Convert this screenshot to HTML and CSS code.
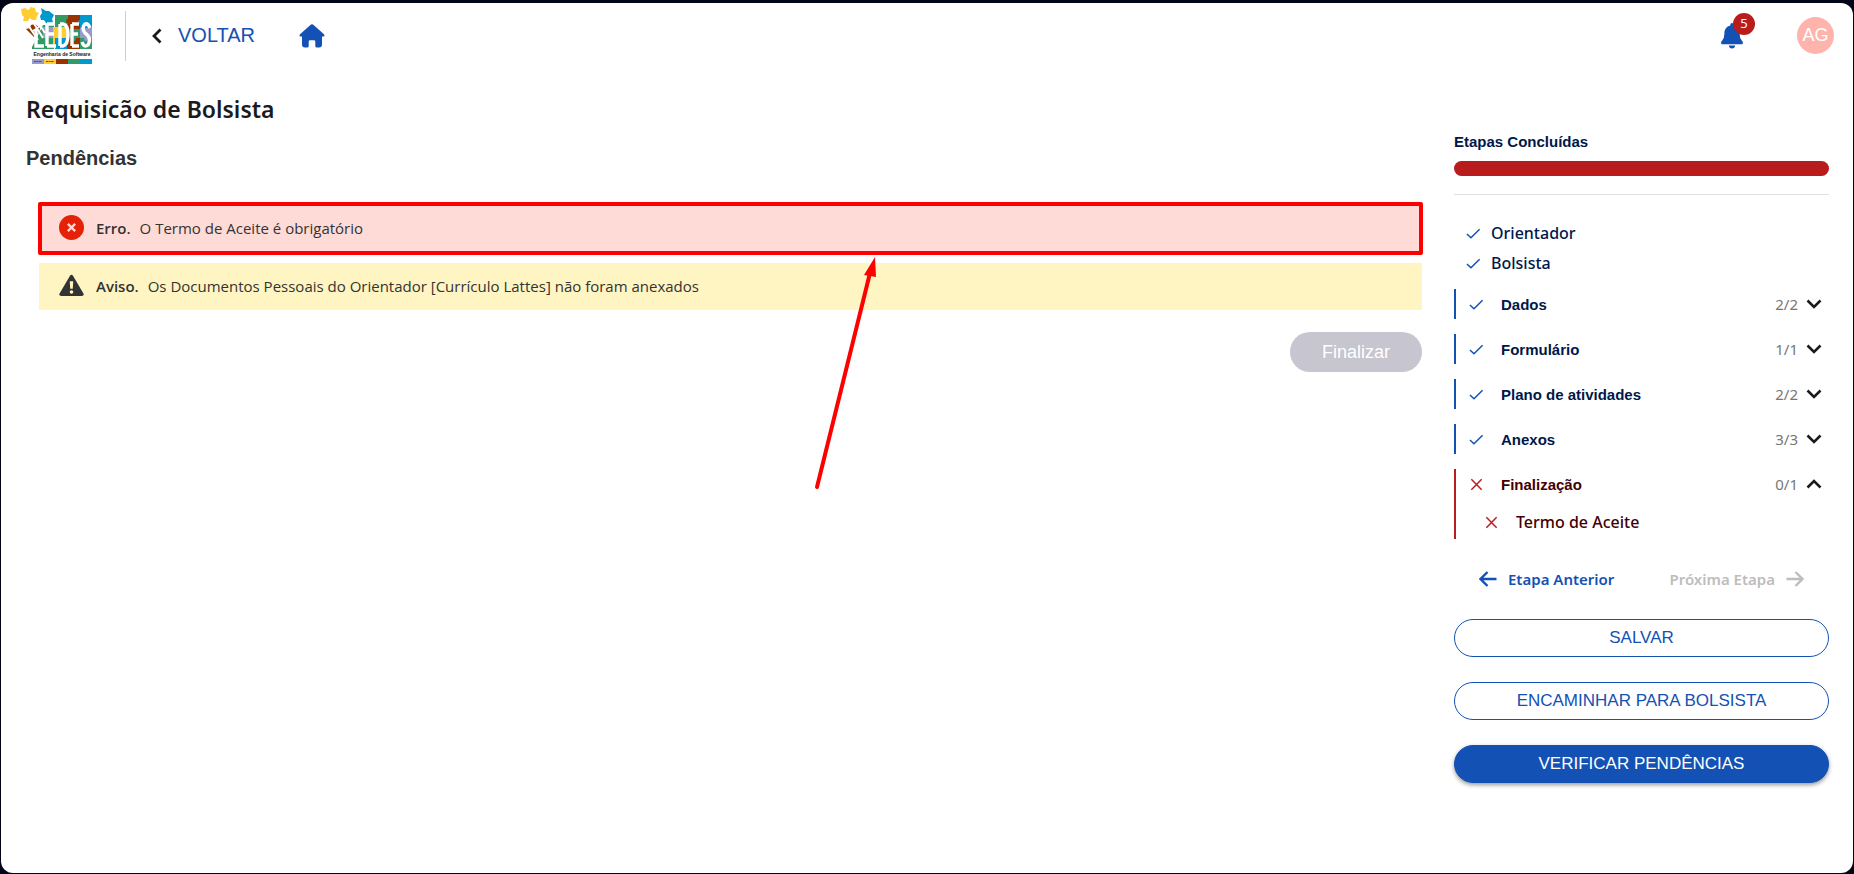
FILE: index.html
```
<!DOCTYPE html>
<html lang="pt-BR">
<head>
  <meta charset="UTF-8">
  <meta name="viewport" content="width=device-width, initial-scale=1">
  <title>Requisicão de Bolsista</title>
  <link rel="stylesheet" href="styles.css">
</head>
<body>

  <!-- Ícones reutilizados -->
  <svg class="sprite" aria-hidden="true">
    <symbol id="check" viewBox="0 0 16 16"><path d="M1 8.5 L5.3 12.5 L14.5 3.5" fill="none" stroke="currentColor" stroke-width="1.6"/></symbol>
    <symbol id="cross" viewBox="0 0 16 16"><path d="M2.5 2.5 L13.5 13.5 M13.5 2.5 L2.5 13.5" fill="none" stroke="currentColor" stroke-width="1.6"/></symbol>
    <symbol id="chevron" viewBox="0 0 16 16"><path d="M1.5 4.5 L8 11 L14.5 4.5" fill="none" stroke="currentColor" stroke-width="2.6"/></symbol>
    <symbol id="arrow" viewBox="0 0 18 18"><path d="M1.5 9 H17.5 M8.5 2 L1.5 9 L8.5 16" fill="none" stroke="currentColor" stroke-width="2.4"/></symbol>
  </svg>

  <div class="app">
    <header class="topbar">
      <svg class="logo" viewBox="0 0 72 58" role="img" aria-label="LEDES Engenharia de Software">
        <!-- Quebra-cabeça -->
        <rect x="11" y="17" width="22" height="25" fill="#339966"/>
        <rect x="34" y="8" width="13" height="12" fill="#339966"/>
        <rect x="47" y="8" width="12" height="14" fill="#993300"/>
        <rect x="59" y="8" width="12" height="15" fill="#0099cc"/>
        <rect x="22" y="20" width="13" height="11" fill="#9999cc"/>
        <rect x="32" y="20" width="15" height="20" fill="#ffcc33"/>
        <rect x="47" y="22" width="12" height="9" fill="#339966"/>
        <rect x="59" y="21" width="12" height="12" fill="#9999cc"/>
        <rect x="34" y="31" width="12" height="11" fill="#0099cc"/>
        <rect x="46" y="31" width="13" height="11" fill="#993300"/>
        <rect x="59" y="31" width="12" height="11" fill="#339966"/>
        <circle cx="47" cy="14" r="2" fill="#993300"/>
        <circle cx="59" cy="15" r="2" fill="#0099cc"/>
        <circle cx="53" cy="32" r="2" fill="#339966"/>
        <circle cx="65" cy="32" r="2" fill="#9999cc"/>
        <path d="M0 16 H10 L22 14 V7 H33 V18 H22 L11 40 H0 Z" fill="#fff"/>
        <path d="M0 2 L5 1 L6 3 L9 2 L9 0 L14 1 L15 5 L18 6 L16 9 L15 13 L11 13 L9 11 L7 14 L2 14 L3 10 L1 8 Z" fill="#ffcc33"/>
        <path d="M20 1 L25 4 L28 4 L33 8 L31 12 L32 15 L29 18 L25 16 L23 13 L20 13 L19 9 L21 6 Z" fill="#0099cc"/>
        <path d="M5 22 L9 21 L10 18 L14 17 L19 21 L18 25 L13 30 L10 27 Z" fill="#993300"/>
        <path d="M7 18 L17 33 M12 15 L22 31 M16 14 L24 26 M12 24 L18 20" fill="none" stroke="#fff" stroke-width="2"/>
        <path d="M15 22 V39 H23 M26 17 V39 M26 17 H34 M26 27 H33 M26 39 H35 M39 17 V39 M39 17 H42 Q47 18 47 27 Q47 38 42 39 H39 M51 17 V39 M51 17 H58 M51 27 H57 M51 39 H58 M69 21 Q67 16 64 17 Q60 21 64 26 Q71 31 67 38 Q63 41 61 35" fill="none" stroke="#fff" stroke-width="3.4"/>
        <text class="logo-text" x="41" y="49" text-anchor="middle">Engenharia de Software</text>
        <rect x="11" y="52" width="12" height="5" fill="#9999cc"/>
        <rect x="23" y="52" width="12" height="5" fill="#ffcc33"/>
        <rect x="35" y="52" width="12" height="5" fill="#993300"/>
        <rect x="47" y="52" width="12" height="5" fill="#339966"/>
        <rect x="59" y="52" width="12" height="5" fill="#0099cc"/>
        <path d="M13 54.5 h8 M25 54.5 h8" stroke="#555" stroke-width="1.2" stroke-dasharray="2 .5"/>
      </svg>
      <a class="back" href="#">
        <svg class="back-icon" viewBox="0 0 10 16" aria-hidden="true"><path d="M8.5 1.5 L2 8 L8.5 14.5" fill="none" stroke="#1b1b1f" stroke-width="2.8"/></svg>
        VOLTAR
      </a>
      <a class="home" href="#" aria-label="Início">
        <svg viewBox="0 0 26 24" aria-hidden="true"><path d="M12 .6 Q13 -.2 14 .6 L25 10.2 Q26.2 12 24.4 12.5 H23 V20.5 Q23 23.5 20 23.5 H17.8 Q16.3 23.5 16.3 22 V17.5 Q16.3 16.2 15 16.2 H11 Q9.7 16.2 9.7 17.5 V22 Q9.7 23.5 8.2 23.5 H6 Q3 23.5 3 20.5 V12.5 H1.6 Q-.2 12 1 10.2 Z" fill="#1351b4"/></svg>
      </a>
      <button class="bell" type="button" aria-label="Notificações">
        <svg viewBox="0 0 22 26" aria-hidden="true"><path d="M11 0 Q12.7 0 12.7 1.8 V2.5 Q18.6 4 18.6 10.5 Q18.6 15 20.8 17.6 Q22 18.8 22 20 Q21.8 21.2 20.5 21.2 H1.5 Q.2 21.2 0 20 Q0 18.8 1.2 17.6 Q3.4 15 3.4 10.5 Q3.4 4 9.3 2.5 V1.8 Q9.3 0 11 0 Z M7.8 22.6 H14.2 Q13.8 25.6 11 25.6 Q8.2 25.6 7.8 22.6 Z" fill="#1351b4"/></svg>
        <span class="badge">5</span>
      </button>
      <button class="avatar" type="button">AG</button>
    </header>

    <div class="layout">
      <main class="content">
        <h1>Requisicão de Bolsista</h1>
        <h2>Pendências</h2>

        <div class="alerts">
          <div class="alert alert-error">
            <svg class="alert-icon" viewBox="0 0 26 26" aria-hidden="true"><circle cx="13" cy="13" r="13" fill="#e52207"/><path d="M9.2 9.2 L16.8 16.8 M16.8 9.2 L9.2 16.8" stroke="#ffdbd7" stroke-width="2.4"/></svg>
            <strong>Erro.</strong>
            <span>O Termo de Aceite é obrigatório</span>
          </div>
          <div class="alert alert-warning">
            <svg class="alert-icon" viewBox="0 0 26 26" aria-hidden="true"><path d="M11.3 3 Q13 .6 14.7 3 L25.4 21.2 Q26.4 24 23.6 24 H2.4 Q-.4 24 .6 21.2 Z" fill="#333"/><path d="M11.2 8.5 H14.8 L14.3 16.5 H11.7 Z" fill="#fff5c2"/><circle cx="13" cy="19.8" r="1.9" fill="#fff5c2"/></svg>
            <strong>Aviso.</strong>
            <span>Os Documentos Pessoais do Orientador [Currículo Lattes] não foram anexados</span>
          </div>
          <svg class="pointer" viewBox="0 0 66 236" aria-hidden="true">
            <path d="M4 230 L57 16" stroke="#f00" stroke-width="4" stroke-linecap="round"/>
            <path d="M62 0 L63 20 L51 18 Z" fill="#f00"/>
          </svg>
        </div>

        <div class="actions">
          <button class="finish" type="button" disabled>Finalizar</button>
        </div>
      </main>

      <aside class="sidebar">
        <h3>Etapas Concluídas</h3>
        <div class="progress"></div>

        <ul class="people">
          <li><svg class="mark"><use href="#check"/></svg>Orientador</li>
          <li><svg class="mark"><use href="#check"/></svg>Bolsista</li>
        </ul>

        <div class="step">
          <button class="step-head" type="button"><svg class="mark"><use href="#check"/></svg><b>Dados</b><span>2/2</span><svg class="toggle"><use href="#chevron"/></svg></button>
        </div>
        <div class="step">
          <button class="step-head" type="button"><svg class="mark"><use href="#check"/></svg><b>Formulário</b><span>1/1</span><svg class="toggle"><use href="#chevron"/></svg></button>
        </div>
        <div class="step">
          <button class="step-head" type="button"><svg class="mark"><use href="#check"/></svg><b>Plano de atividades</b><span>2/2</span><svg class="toggle"><use href="#chevron"/></svg></button>
        </div>
        <div class="step">
          <button class="step-head" type="button"><svg class="mark"><use href="#check"/></svg><b>Anexos</b><span>3/3</span><svg class="toggle"><use href="#chevron"/></svg></button>
        </div>
        <div class="step step-pending">
          <button class="step-head" type="button" aria-expanded="true"><svg class="mark"><use href="#cross"/></svg><b>Finalização</b><span>0/1</span><svg class="toggle toggle-open"><use href="#chevron"/></svg></button>
          <a class="substep" href="#"><svg class="mark"><use href="#cross"/></svg>Termo de Aceite</a>
        </div>

        <div class="pager">
          <button type="button"><svg class="arrow"><use href="#arrow"/></svg>Etapa Anterior</button>
          <button type="button" disabled>Próxima Etapa<svg class="arrow arrow-next"><use href="#arrow"/></svg></button>
        </div>

        <div class="sidebar-actions">
          <button class="btn" type="button">SALVAR</button>
          <button class="btn" type="button">ENCAMINHAR PARA BOLSISTA</button>
          <button class="btn btn-primary" type="button">VERIFICAR PENDÊNCIAS</button>
        </div>
      </aside>
    </div>
  </div>

</body>
</html>
```

FILE: styles.css
```
* {
  box-sizing: border-box;
}

body {
  margin: 0;
  min-height: 100vh;
  padding: 3px 1px 1px;
  display: flex;
  background: #020617;
  color: #1b1b1f;
  font-family: "Noto Sans", sans-serif;
  font-size: 16px;
}

button {
  padding: 0;
  border: 0;
  background: none;
  color: inherit;
  font: inherit;
  cursor: pointer;
}

a {
  color: inherit;
  text-decoration: none;
}

.sprite {
  position: absolute;
  width: 0;
  height: 0;
}

.app {
  flex: 1;
  background: #fff;
  border-radius: 12px;
}

/* Cabeçalho */
.topbar {
  display: flex;
  align-items: center;
  height: 65px;
  padding: 0 19px 0 20px;
}

.logo {
  width: 72px;
  height: 58px;
}

.logo-text {
  font: bold 5px "Liberation Sans", sans-serif;
  fill: #222;
}

.back {
  display: flex;
  align-items: center;
  gap: 16px;
  height: 50px;
  margin-left: 32px;
  padding-left: 26px;
  border-left: 1px solid #ccc;
  color: #1351b4;
  font: 20px "Liberation Sans", sans-serif;
}

.back-icon {
  width: 10px;
  height: 16px;
}

.home {
  margin-left: 44px;
}

.home svg {
  display: block;
  width: 26px;
  height: 24px;
}

.bell {
  position: relative;
  margin-left: auto;
}

.bell svg {
  display: block;
  width: 22px;
  height: 26px;
}

.badge {
  position: absolute;
  top: -10px;
  left: 12px;
  width: 22px;
  height: 22px;
  border-radius: 50%;
  background: #b91c1c;
  color: #fff;
  font-size: 13px;
  line-height: 20px;
}

.avatar {
  width: 37px;
  height: 37px;
  margin-left: 54px;
  border-radius: 50%;
  background: #ffb4ab;
  color: #fff;
  font: 18px "Liberation Sans", sans-serif;
}

/* Conteúdo */
.layout {
  display: flex;
  gap: 32px;
  padding: 0 24px 0 25px;
}

.content {
  flex: 1;
  padding-top: 25px;
}

h1,
h2,
h3 {
  margin: 0;
}

h1 {
  font-size: 23px;
  font-weight: 600;
  line-height: 32px;
}

h2 {
  margin-top: 21px;
  color: #333;
  font: bold 20px/24px "Liberation Sans", sans-serif;
}

.alerts {
  position: relative;
  display: flex;
  flex-direction: column;
  gap: 11px;
  margin-top: 35px;
  padding-left: 13px;
}

.alert {
  display: flex;
  align-items: center;
  gap: 9px;
  height: 47px;
  padding: 0 20px 2px;
  color: #333;
  font: 15px "Open Sans", sans-serif;
}

.alert strong {
  font-weight: 600;
}

.alert-icon {
  width: 25px;
  height: 25px;
  margin-right: 3px;
}

.alert-error {
  position: relative;
  background: #ffdbd7;
}

.alert-error::after {
  content: "";
  position: absolute;
  inset: -3px -1px;
  border: 4px solid #f00;
  border-radius: 2px;
}

.alert-warning {
  background: #fff5c2;
}

.pointer {
  position: absolute;
  top: 52px;
  left: 787px;
  width: 66px;
  height: 236px;
}

.actions {
  display: flex;
  justify-content: flex-end;
  margin-top: 22px;
}

.finish {
  height: 40px;
  padding: 0 32px;
  border-radius: 20px;
  background: #c6c5d0;
  color: #fff;
  font: 18px "Liberation Sans", sans-serif;
}

/* Etapas */
.sidebar {
  width: 375px;
  padding-top: 64px;
}

h3 {
  color: #001849;
  font: bold 15px/20px "Liberation Sans", sans-serif;
}

.progress {
  height: 15px;
  margin-top: 9px;
  border-radius: 8px;
  background: #b91c1c;
}

.people {
  margin: 18px 0 11px;
  padding: 23px 0 0 12px;
  border-top: 1px solid #e0e0e0;
  list-style: none;
}

.people li {
  display: flex;
  align-items: center;
  gap: 10px;
  height: 30px;
  color: #001849;
  font-size: 16px;
  font-weight: 500;
}

.mark {
  width: 15px;
  height: 15px;
  color: #1351b4;
}

.step {
  margin-bottom: 15px;
  padding-left: 13px;
  border-left: 2px solid #1351b4;
  color: #001849;
}

.step-head {
  display: flex;
  align-items: center;
  width: 100%;
  height: 30px;
  padding-right: 7px;
  text-align: left;
}

.step-head b {
  margin-left: 17px;
  font: bold 15px "Liberation Sans", sans-serif;
}

.step-head span {
  margin-left: auto;
  color: #777;
  font-size: 15px;
}

.toggle {
  width: 16px;
  height: 16px;
  margin-left: 8px;
  color: #1b1b1f;
}

.toggle-open {
  transform: rotate(180deg);
}

.step-pending {
  height: 70px;
  border-color: #b91c1c;
  color: #410002;
}

.step-pending .mark {
  color: #b91c1c;
}

.substep {
  display: flex;
  align-items: center;
  gap: 17px;
  margin-top: 8px;
  padding-left: 15px;
  font-size: 16px;
  font-weight: 500;
  line-height: 30px;
}

.pager {
  display: flex;
  justify-content: space-between;
  padding: 0 25px;
}

.pager button {
  display: flex;
  align-items: center;
  gap: 11px;
  height: 50px;
  color: #1351b4;
  font-size: 15px;
  font-weight: 600;
}

.pager button:disabled {
  color: #bdbdbd;
}

.arrow {
  width: 18px;
  height: 18px;
}

.arrow-next {
  transform: rotate(180deg);
}

.sidebar-actions {
  display: flex;
  flex-direction: column;
  gap: 25px;
  margin-top: 15px;
}

.btn {
  height: 38px;
  border: 1px solid #1351b4;
  border-radius: 20px;
  background: #fff;
  color: #1351b4;
  font: 17px "Liberation Sans", sans-serif;
}

.btn-primary {
  background: #1351b4;
  color: #fff;
  box-shadow: 0 2px 4px rgba(0, 0, 0, 0.4);
}
```
